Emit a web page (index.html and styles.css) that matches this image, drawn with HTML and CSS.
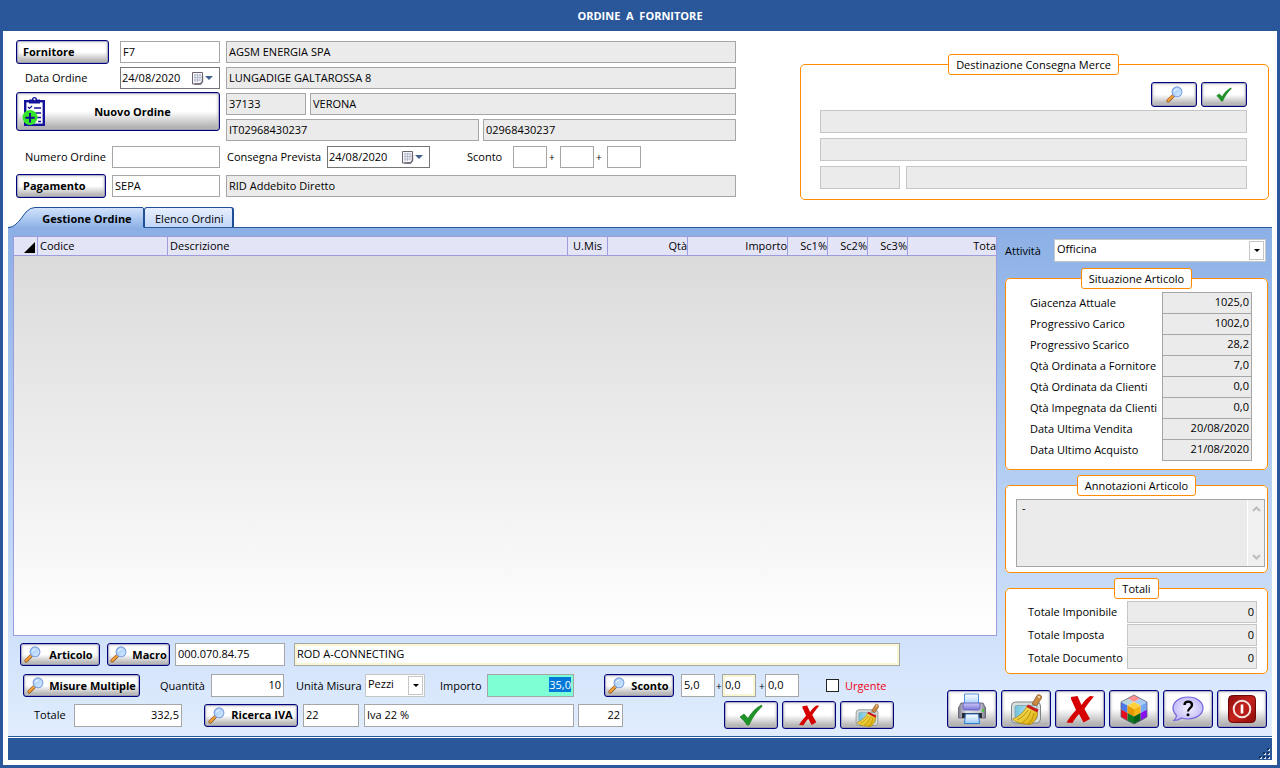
FILE: index.html
```html
<!DOCTYPE html>
<html lang="it">
<head>
<meta charset="utf-8">
<title>Ordine a Fornitore</title>
<link rel="stylesheet" href="styles.css">
</head>
<body>
<svg class="defs" aria-hidden="true">
  <defs>
    <linearGradient id="gBroom" x1="0" y1="0" x2="1" y2="1"><stop offset="0" stop-color="#fff27a"/><stop offset="1" stop-color="#d9a800"/></linearGradient>
    <linearGradient id="gGlass" x1="0" y1="0" x2="1" y2="1"><stop offset="0" stop-color="#9cc6f8"/><stop offset="1" stop-color="#d8ecff"/></linearGradient>
    <linearGradient id="gPaper" x1="0" y1="0" x2="0" y2="1"><stop offset="0" stop-color="#ffffff"/><stop offset="1" stop-color="#9ccaf8"/></linearGradient>
    <linearGradient id="gScreen" x1="0" y1="0" x2="1" y2="0"><stop offset="0" stop-color="#6fc3dc"/><stop offset="1" stop-color="#d5f0f6"/></linearGradient>
    <linearGradient id="gPrinter" x1="0" y1="0" x2="1" y2="0"><stop offset="0" stop-color="#7b7b8c"/><stop offset=".3" stop-color="#e4e4ee"/><stop offset=".8" stop-color="#c9c9d6"/><stop offset="1" stop-color="#777788"/></linearGradient>
    <linearGradient id="gViolet" x1="0" y1="0" x2="0" y2="1"><stop offset="0" stop-color="#c9c7f8"/><stop offset="1" stop-color="#7d77d8"/></linearGradient>
    <radialGradient id="gBubble"><stop offset="0" stop-color="#f3f1ff"/><stop offset="1" stop-color="#c3bdfa"/></radialGradient>
    <linearGradient id="gPower" x1="0" y1="0" x2="1" y2="1"><stop offset="0" stop-color="#8e0d0d"/><stop offset=".5" stop-color="#c4221c"/><stop offset="1" stop-color="#8c0a0a"/></linearGradient>
    <linearGradient id="gTab" x1="0" y1="0" x2="0" y2="1"><stop offset="0" stop-color="#d3e3fb"/><stop offset="1" stop-color="#8cb1e6"/></linearGradient>
  </defs>
  <symbol id="lens" viewBox="0 0 17 17">
    <path d="M2.200 14.800 7.500 9.500" stroke="#8a4a10" stroke-width="3.400" stroke-linecap="round"/>
    <path d="M2.200 14.600 7.300 9.500" stroke="#f2a33c" stroke-width="2.200" stroke-linecap="round"/>
    <circle cx="11" cy="5.800" r="4.900" fill="url(#gGlass)" stroke="#7d9fe0" stroke-width="1.100"/>
    <path d="M8.500 5.500a2.600 2.600 0 0 1 3-2.300" stroke="#eef6ff" stroke-width="1.200" fill="none"/>
  </symbol>
  <symbol id="check" viewBox="0 0 24 22">
    <path d="M1 13 5 10l4 4.500C12 9 16.500 4 22.500 1l.5 1.500C17.500 7.500 13 14 10 21H8C6 18 4 15.500 1 13z" fill="#1d9427" stroke="#117018" stroke-width=".6"/>
  </symbol>
  <symbol id="cross" viewBox="0 0 30 30">
    <path d="M6 3 12.500 2l4 9C19 7 22 4 25 2l4 .500C26 6 22 11 19.500 15L25 25l-6.500 3.500-4.500-8.500C11 23.500 9 26 7.500 29L1.500 28.500C4 24 7.500 20 11 16L6 5z" fill="#d60000"/>
  </symbol>
  <symbol id="broom" viewBox="0 0 32 32">
    <rect x="1.500" y="9" width="29" height="21" rx="4" fill="#d9dedf" stroke="#7d8586"/>
    <rect x="5" y="12.500" width="22" height="14" rx="1.500" fill="url(#gScreen)" stroke="#7fa0a8" stroke-width=".8"/>
    <path d="m22 11 5-8.500c1.500-2 5.500 0 4.500 2.500L26.500 13z" fill="#c98a45" stroke="#7c4b18" stroke-width=".7"/>
    <circle cx="29" cy="4" r=".9" fill="#fff2d8"/>
    <path d="m17 13 10 5c1.500 5-2 11-7 13.500-6-.5-13-1-17.500-5.500C9 24 14 19 17 13z" fill="url(#gBroom)" stroke="#a77b00" stroke-width=".7"/>
    <path d="M18 17c-3 5-7 8-11 10M21 18c-2 6-5 9-9 12M24 20c-1 5-3 9-6 11" fill="none" stroke="#b58900" stroke-width=".9"/>
    <path d="m18 11.500 10.500 5-1.200 3L16.500 14z" fill="#c81e1e"/>
  </symbol>
  <symbol id="calendar" viewBox="0 0 12 13">
    <path d="M.500.500h10v9l-2 2.500h-8z" fill="#f6f6fa" stroke="#6d6470"/>
    <path d="M10.500 3.500v6l-2 2.500h-6" fill="none" stroke="#6d6470" stroke-width="1.400"/>
    <path d="M2 3h7M2 5.500h7M2 8h6M3 2v8M5.500 2v8M8 2v7" stroke="#a9b0c4" stroke-width=".8"/>
  </symbol>
</svg>

<div class="window">
  <header class="titlebar"><h1>ORDINE&nbsp; A&nbsp; FORNITORE</h1></header>

  <main class="client">
    <section class="head">
      <form class="order">
        <div class="order-top">
          <div class="order-left">
            <div class="pair">
              <button type="button" class="btn left w93">Fornitore</button>
              <input class="field" value="F7" aria-label="Codice fornitore">
            </div>
            <div class="pair">
              <label class="indent" for="dataOrdine">Data Ordine</label>
              <span class="date"><input id="dataOrdine" value="24/08/2020"><button type="button" aria-label="Apri calendario"><svg width="12" height="13"><use href="#calendar"/></svg><i class="drop"></i></button></span>
            </div>
            <button type="button" class="btn new">
              <svg width="24" height="30" viewBox="0 0 24 30" aria-hidden="true">
                <rect x="3.200" y="4.200" width="18.600" height="23.600" fill="#fff" stroke="#14149a" stroke-width="2.400"/>
                <path d="M7 2.500h3a2.500 2.500 0 0 1 5 0h3v4H7z" fill="#14149a"/><circle cx="12.500" cy="2.300" r="1" fill="#fff"/>
                <path d="m6 10 1.500 1.500L10 9M6 15l1.500 1.500L10 14" fill="none" stroke="#14149a" stroke-width="1.200"/>
                <path d="M12 11h7M12 16h7M15 20.500h4M16 24.500h3" stroke="#14149a" stroke-width="1.600"/>
                <circle cx="8" cy="20.500" r="7.500" fill="#35e528"/>
                <path d="M8 16v9.500M3.300 20.700h9.500" stroke="#10108a" stroke-width="2"/>
              </svg>
              <span>Nuovo Ordine</span>
            </button>
          </div>
          <div class="order-right">
            <input class="field ro" readonly value="AGSM ENERGIA SPA" aria-label="Ragione sociale">
            <input class="field ro" readonly value="LUNGADIGE GALTAROSSA 8" aria-label="Indirizzo">
            <div class="split cap">
              <input class="field ro" readonly value="37133" aria-label="CAP">
              <input class="field ro" readonly value="VERONA" aria-label="Città">
            </div>
            <div class="split vat">
              <input class="field ro" readonly value="IT02968430237" aria-label="Partita IVA">
              <input class="field ro" readonly value="02968430237" aria-label="Codice fiscale">
            </div>
          </div>
        </div>
        <div class="order-number">
          <label class="indent" for="numero">Numero Ordine</label>
          <input id="numero" class="field w108">
          <label for="consegna">Consegna Prevista</label>
          <span class="date w103"><input id="consegna" value="24/08/2020"><button type="button" aria-label="Apri calendario"><svg width="12" height="13"><use href="#calendar"/></svg><i class="drop"></i></button></span>
          <label for="sc1">Sconto</label>
          <input id="sc1" class="field">
          <span class="plus">+</span>
          <input class="field" aria-label="Sconto 2">
          <span class="plus">+</span>
          <input class="field" aria-label="Sconto 3">
        </div>
        <div class="payment">
          <button type="button" class="btn left">Pagamento</button>
          <input class="field" value="SEPA" aria-label="Codice pagamento">
          <input class="field ro" readonly value="RID Addebito Diretto" aria-label="Descrizione pagamento">
        </div>
      </form>

      <fieldset class="box delivery">
        <legend>Destinazione Consegna Merce</legend>
        <div class="delivery-tools">
          <button type="button" class="btn" aria-label="Cerca destinazione"><svg width="17" height="17"><use href="#lens"/></svg></button>
          <button type="button" class="btn" aria-label="Conferma destinazione"><svg width="16" height="15"><use href="#check"/></svg></button>
        </div>
        <input class="field ro pale" readonly aria-label="Nome destinazione">
        <input class="field ro pale" readonly aria-label="Indirizzo destinazione">
        <div class="delivery-city">
          <input class="field ro pale" readonly aria-label="CAP destinazione">
          <input class="field ro pale" readonly aria-label="Città destinazione">
        </div>
      </fieldset>
    </section>

    <nav class="tabs">
      <button type="button" class="tab active"><svg class="tab-shape" width="136" height="21" viewBox="0 0 136 21" aria-hidden="true"><path d="M0 21 C6 20 8 17 12 13 L18 5 Q22 .5 27 .5 H134 Q135.500 .5 135.500 2 V21z" fill="url(#gTab)"/><path d="M0 20.500 C6 20 8 17 12 13 L18 5 Q22 .5 27 .5 H134 Q135.500 .5 135.500 2 V20" fill="none" stroke="#1f5096"/></svg><span>Gestione Ordine</span></button>
      <button type="button" class="tab">Elenco Ordini</button>
    </nav>

    <section class="panel">
      <div class="grid-area">
        <table class="items">
          <colgroup><col class="c24"><col class="c130"><col><col class="c40"><col class="c80"><col class="c100"><col class="c40"><col class="c40"><col class="c40"><col class="c88"></colgroup>
          <thead><tr>
            <th><svg width="11" height="11" viewBox="0 0 11 11" aria-hidden="true"><path d="M11 0v11H0z"/></svg></th>
            <th>Codice</th><th>Descrizione</th><th class="mid">U.Mis</th><th class="num">Qtà</th><th class="num">Importo</th><th class="num">Sc1%</th><th class="num">Sc2%</th><th class="num">Sc3%</th><th class="num">Tota</th>
          </tr></thead>
        </table>
      </div>

      <aside class="side">
        <div class="activity">
          <label for="attivita">Attività</label>
          <span class="combo"><select id="attivita"><option>Officina</option></select><i class="arrow"></i></span>
        </div>
        <fieldset class="box">
          <legend>Situazione Articolo</legend>
          <div class="stock">
            <label for="s1">Giacenza Attuale</label><input id="s1" class="field ro num" readonly value="1025,0">
            <label for="s2">Progressivo Carico</label><input id="s2" class="field ro num" readonly value="1002,0">
            <label for="s3">Progressivo Scarico</label><input id="s3" class="field ro num" readonly value="28,2">
            <label for="s4">Qtà Ordinata a Fornitore</label><input id="s4" class="field ro num" readonly value="7,0">
            <label for="s5">Qtà Ordinata da Clienti</label><input id="s5" class="field ro num" readonly value="0,0">
            <label for="s6">Qtà Impegnata da Clienti</label><input id="s6" class="field ro num" readonly value="0,0">
            <label for="s7">Data Ultima Vendita</label><input id="s7" class="field ro num" readonly value="20/08/2020">
            <label for="s8">Data Ultimo Acquisto</label><input id="s8" class="field ro num" readonly value="21/08/2020">
          </div>
        </fieldset>
        <fieldset class="box">
          <legend>Annotazioni Articolo</legend>
          <div class="notes">
            <textarea readonly aria-label="Annotazioni Articolo">-</textarea>
            <div class="scroll">
              <svg width="9" height="6" viewBox="0 0 9 6"><path d="m1 5 3.500-3.500L8 5" fill="none" stroke="#bdbdbd" stroke-width="2"/></svg>
              <svg width="9" height="6" viewBox="0 0 9 6"><path d="m1 1 3.500 3.500L8 1" fill="none" stroke="#bdbdbd" stroke-width="2"/></svg>
            </div>
          </div>
        </fieldset>
        <fieldset class="box">
          <legend>Totali</legend>
          <div class="totals">
            <label for="t1">Totale Imponibile</label><input id="t1" class="field ro pale num" readonly value="0">
            <label for="t2">Totale Imposta</label><input id="t2" class="field ro pale num" readonly value="0">
            <label for="t3">Totale Documento</label><input id="t3" class="field ro pale num" readonly value="0">
          </div>
        </fieldset>
      </aside>

      <form class="entry">
        <div class="row row-article">
          <button type="button" class="btn icon w80"><svg width="17" height="17"><use href="#lens"/></svg><span>Articolo</span></button>
          <button type="button" class="btn icon w63"><svg width="17" height="17"><use href="#lens"/></svg><span>Macro</span></button>
          <input class="field w110" value="000.070.84.75" aria-label="Codice articolo">
          <input class="field cream" value="ROD A-CONNECTING" aria-label="Descrizione articolo">
        </div>
        <div class="row row-quantity">
          <button type="button" class="btn icon w117"><svg width="17" height="17"><use href="#lens"/></svg><span>Misure Multiple</span></button>
          <label for="qta">Quantità</label><input id="qta" class="field num w73" value="10">
          <label for="um">Unità Misura</label>
          <span class="combo w60"><select id="um"><option>Pezzi</option></select><i class="arrow"></i></span>
          <label for="importo">Importo</label><input id="importo" class="field num w87 focus" value="35,0">
          <button type="button" class="btn icon w70"><svg width="17" height="17"><use href="#lens"/></svg><span>Sconto</span></button>
          <input class="field w34" value="5,0" aria-label="Sconto riga 1">
          <span class="plus">+</span>
          <input class="field w34 cream" value="0,0" aria-label="Sconto riga 2">
          <span class="plus">+</span>
          <input class="field w34" value="0,0" aria-label="Sconto riga 3">
          <label class="urgent"><input type="checkbox">Urgente</label>
        </div>
        <div class="row row-total">
          <label for="tot">Totale</label><input id="tot" class="field num w108" value="332,5">
          <button type="button" class="btn icon w94"><svg width="17" height="17"><use href="#lens"/></svg><span>Ricerca IVA</span></button>
          <input class="field w56" value="22" aria-label="Codice IVA">
          <input class="field w210" value="Iva 22 %" aria-label="Descrizione IVA">
          <input class="field num w45" value="22" aria-label="Aliquota IVA">
          <button type="button" class="btn act" aria-label="Conferma riga"><svg width="24" height="22"><use href="#check"/></svg></button>
          <button type="button" class="btn act" aria-label="Annulla riga"><svg width="22" height="22"><use href="#cross"/></svg></button>
          <button type="button" class="btn act" aria-label="Pulisci riga"><svg width="24" height="24"><use href="#broom"/></svg></button>
        </div>
      </form>

      <div class="toolbar">
        <button type="button" class="btn" aria-label="Stampa"><svg width="28" height="32" viewBox="0 0 28 32">
          <path d="M3 10h22l2.500 5v10H.5V15z" fill="url(#gPrinter)" stroke="#555566" stroke-width=".8"/>
          <path d="M6.500 1h14v11h-14z" fill="url(#gPaper)" stroke="#4f92dc"/>
          <path d="M5 10h17v5q0 2-2 2H7q-2 0-2-2z" fill="url(#gViolet)" stroke="#5a54b4" stroke-width=".8"/>
          <path d="M4 20h20v5H4z" fill="#2b2b33"/><path d="M7.500 21h13l1 9.500h-15z" fill="url(#gPaper)" stroke="#2f7ad0"/>
          <circle cx="25" cy="17.500" r="1.300" fill="#3ecf24"/></svg></button>
        <button type="button" class="btn" aria-label="Pulisci"><svg width="32" height="32"><use href="#broom"/></svg></button>
        <button type="button" class="btn" aria-label="Elimina"><svg width="30" height="30"><use href="#cross"/></svg></button>
        <button type="button" class="btn" aria-label="Articoli"><svg width="28" height="31" viewBox="0 0 28 31">
          <path d="M14 1 20.500 4.500 14 8 7.500 4.500z" fill="#ff9090"/><path d="m7.500 4.500 6.500 3.500-6.500 3.500L1 8z" fill="#b8d4dc"/><path d="M20.500 4.500 27 8l-6.500 3.500L14 8z" fill="#a9ccf4"/><path d="m14 8 6.500 3.500L14 15l-6.500-3.500z" fill="#ffd23c"/>
          <path d="m1 8 6.500 3.500v7.500L1 15.500z" fill="#4a78e8"/><path d="M7.500 11.500 14 15v7.500L7.500 19z" fill="#e89a00"/><path d="M1 15.500 7.500 19v8L1 23z" fill="#e80a1e"/><path d="m7.500 19 6.500 3.500V30l-6.500-3z" fill="#0d7a22"/>
          <path d="m27 8-6.500 3.500v7.500l6.500-3.500z" fill="#76a8f8"/><path d="M20.500 11.500 14 15v7.500l6.500-3.500z" fill="#f8b414"/><path d="M27 15.500 20.500 19v8l6.500-4z" fill="#8a10f0"/><path d="M20.500 19 14 22.500V30l6.500-3z" fill="#076018"/>
          <path d="M14 1 27 8v15l-13 7L1 23V8z" fill="none" stroke="#60607a" stroke-width=".8"/></svg></button>
        <button type="button" class="btn" aria-label="Aiuto"><svg width="32" height="26" viewBox="0 0 32 26">
          <path d="M16 1c8.500 0 15 4.800 15 11s-6.500 11-15 11c-2.500 0-4.500-.4-6.500-1-2 1.500-4.500 2.500-7.500 2.500 1.500-1.500 2.500-3 2.500-5C2.500 17.500 1 15 1 12 1 5.800 7.500 1 16 1z" fill="url(#gBubble)" stroke="#7464d8" stroke-width="1.200"/>
          <path d="M12.500 9c0-4.500 7.500-4.500 7.500 0 0 3-4 3.300-4 6.500" fill="none" stroke="#000" stroke-width="2.300"/><circle cx="16" cy="18.800" r="1.500"/></svg></button>
        <button type="button" class="btn" aria-label="Esci"><svg width="28" height="28" viewBox="0 0 28 28">
          <rect x=".5" y=".5" width="27" height="27" rx="4" fill="url(#gPower)" stroke="#6f0707"/><circle cx="14" cy="14" r="8.300" fill="none" stroke="#f7e4e2" stroke-width="2"/><path d="M14 9.500v9" stroke="#fff" stroke-width="2.600"/></svg></button>
      </div>
    </section>
    <footer class="status">
      <svg width="13" height="12" viewBox="0 0 13 12" aria-hidden="true"><path d="M9 1h2v2H9zM5 5h2v2H5zM9 5h2v2H9zM1 9h2v2H1zM5 9h2v2H5zM9 9h2v2H9z" fill="#d5dff0"/><path d="M8 0h2v2H8zM4 4h2v2H4zM8 4h2v2H8zM0 8h2v2H0zM4 8h2v2H4zM8 8h2v2H8z" fill="#16305c"/></svg>
    </footer>
  </main>
</div>
<script src="app.js"></script>
</body>
</html>
```

FILE: styles.css
```css
* { box-sizing: border-box; }

body {
  margin: 0;
  font: 11px/14px "Open Sans", "Noto Sans", sans-serif;
  color: #000;
}

button, input, select, textarea {
  font: inherit;
  color: inherit;
  margin: 0;
}

.defs { position: absolute; width: 0; height: 0; }

.window {
  display: flex;
  flex-direction: column;
  min-height: 100vh;
  padding: 0 3px 3px;
  background: #2a579a;
}

.titlebar {
  display: flex;
  align-items: center;
  justify-content: center;
  height: 31px;
  color: #fff;
}
.titlebar h1 { margin: 0; font-size: 11px; font-weight: 700; }

.client {
  flex: 1;
  display: flex;
  flex-direction: column;
  padding: 9px 5px 5px;
  background: #fff;
}

label { white-space: nowrap; }

/* Fields */
.field {
  width: 100%;
  min-width: 0;
  height: 22px;
  padding: 0 2px 2px;
  border: 1px solid #a6a6a6;
  border-radius: 0;
  background: #fff;
}
.ro { background: #ebebeb; }
.pale { border-color: #c6c6c6; }
.num { text-align: right; }
.cream { box-shadow: inset 0 0 0 2px #f9f6d4; }
.focus { background: #7fffd4; outline: none; }
.focus::selection { background: #0078d7; color: #fff; }

.date {
  display: flex;
  align-items: center;
  height: 22px;
  width: 100%;
  padding-right: 6px;
  border: 1px solid #767676;
  background: #fff;
}
.date input {
  flex: 1;
  min-width: 0;
  padding: 0 1px;
  border: 0;
  background: none;
}
.date button {
  display: flex;
  align-items: center;
  gap: 1px;
  padding: 0;
  border: 0;
  background: none;
}
.drop {
  border: 4px solid transparent;
  border-top-color: #44608f;
  border-bottom: 0;
}

.combo { position: relative; display: block; height: 23px; }
.combo select {
  width: 100%;
  height: 100%;
  padding: 0 2px 3px;
  border: 1px solid #c6c6c6;
  border-radius: 0;
  background: #fff;
  appearance: none;
}
.arrow {
  position: absolute;
  top: 2px;
  right: 2px;
  bottom: 2px;
  display: flex;
  align-items: center;
  justify-content: center;
  width: 15px;
  border: 1px solid #c6c6c6;
  background: #fff;
  pointer-events: none;
}
.arrow::before {
  content: "";
  border: 3px solid transparent;
  border-top-color: #000;
  border-bottom: 0;
}

/* Buttons */
.btn {
  display: flex;
  align-items: center;
  justify-content: center;
  width: 100%;
  height: 24px;
  padding: 0;
  border: 1px solid #000080;
  border-radius: 3px;
  background: linear-gradient(#fff 0%, #fff 50%, #e4e4e4 65%, #a4a4a4 100%);
  box-shadow: inset 0 0 0 1px rgba(120, 120, 160, .45), inset 0 0 2px 2px rgba(200, 200, 200, .5);
  font-weight: 700;
  white-space: nowrap;
}
.left { justify-content: flex-start; padding-left: 6px; }
.icon { height: 23px; gap: 5px; padding: 0 3px; }
.icon svg { flex: none; }
.icon span { flex: 1; text-align: center; }

.w34 { width: 34px; }
.w45 { width: 45px; }
.w56 { width: 56px; }
.w60 { width: 60px; }
.w63 { width: 63px; }
.w70 { width: 70px; }
.w73 { width: 73px; }
.w80 { width: 80px; }
.w87 { width: 87px; }
.w93 { width: 93px; }
.w94 { width: 94px; }
.w103 { width: 103px; }
.w108 { width: 108px; }
.w110 { width: 110px; }
.w117 { width: 117px; }
.w210 { width: 210px; }

/* Order header */
.head {
  display: grid;
  grid-template-columns: 720fr 469fr;
  column-gap: 64px;
  padding: 0 3px 0 8px;
}
.order { min-width: 0; }
.order-top { display: grid; grid-template-columns: 204px 1fr; column-gap: 6px; }
.order-left { display: grid; row-gap: 3px; align-content: start; }
.pair { display: grid; grid-template-columns: 104px 100px; align-items: center; }
.indent { padding-left: 9px; }
.new { height: 39px; justify-content: flex-start; padding-left: 5px; }
.new span { flex: 1; text-align: center; }
.order-right { display: grid; row-gap: 4px; padding-top: 1px; }
.split { display: grid; }
.cap { grid-template-columns: 80px 1fr; column-gap: 4px; }
.vat { grid-template-columns: 253px 1fr; column-gap: 4px; }
.order-number {
  display: grid;
  grid-template-columns: 96px 115px 100px 140px 46px 34px 13px 34px 13px 34px;
  align-items: center;
  margin-top: 5px;
}
.plus { font-size: 10px; }
.order-number .plus { padding-left: 2px; }
.payment {
  display: grid;
  grid-template-columns: 90px 108px 1fr;
  column-gap: 6px;
  align-items: center;
  margin-top: 6px;
}

/* Orange group boxes */
.box {
  min-width: 0;
  margin: 0;
  padding: 0;
  border: 1px solid #ff8c00;
  border-radius: 5px;
  background: #fff;
}
.box legend {
  height: 21px;
  margin: 0 auto;
  padding: 2px 7px;
  border: 1px solid #ff8c00;
  border-radius: 3px;
  background: #fff;
  line-height: 15px;
}
.delivery {
  align-self: start;
  margin-top: 14px;
  padding: 7px 21px 10px 19px;
}
.delivery .field { display: block; height: 23px; margin-bottom: 5px; }
.delivery-tools { display: flex; justify-content: flex-end; gap: 4px; margin-bottom: 3px; }
.delivery-tools .btn { width: 46px; height: 25px; }
.delivery-city { display: grid; grid-template-columns: 80px 1fr; column-gap: 6px; }
.delivery-city .field { margin-bottom: 0; }

/* Tabs */
.tabs { display: flex; margin-top: 7px; height: 20px; }
.tab {
  position: relative;
  height: 20px;
  padding: 2px 8px 0 10px;
  border: 1px solid #1f5096;
  border-bottom: 0;
  border-right-width: 2px;
  border-radius: 3px 3px 0 0;
  background: linear-gradient(#e6effd, #c2d6f8);
}
.active {
  width: 136px;
  height: 21px;
  padding: 2px 0 0 22px;
  border: 0;
  background: none;
  font-weight: 700;
  z-index: 1;
}
.tab-shape { position: absolute; left: 0; top: 0; }
.active span { position: relative; }

/* Order lines panel */
.panel {
  flex: 1;
  display: grid;
  grid-template-columns: 1fr 58px 263px;
  grid-template-rows: 1fr 40px auto;
  padding: 8px 4px 0 5px;
  border-top: 1px solid #2a5a9c;
  border-bottom: 1px solid #2a579a;
  background: linear-gradient(#8cb0e6, #b5cff4 50%, #e1edfe);
}
.grid-area {
  grid-column: 1 / 3;
  grid-row: 1;
  margin-right: 8px;
  border: 1px solid #9c9cde;
  background: linear-gradient(#d9d9d9, #fff);
  overflow: hidden;
}
.items {
  width: 100%;
  table-layout: fixed;
  border-collapse: separate;
  border-spacing: 0;
}
.items th {
  height: 19px;
  padding: 0 0 0 2px;
  border-right: 1px solid #9c9cde;
  border-bottom: 1px solid #9c9cde;
  background: #e4e4f7;
  font-weight: 400;
  text-align: left;
  white-space: nowrap;
}
.items th:first-child { text-align: right; }
.items th:last-child { border-right: 0; }
.items th.num { text-align: right; padding: 0; }
.items th.mid { text-align: center; padding: 0; }
.items svg { display: block; margin: 2px 2px 0 auto; }
.c24 { width: 24px; }
.c40 { width: 40px; }
.c80 { width: 80px; }
.c88 { width: 88px; }
.c100 { width: 100px; }
.c130 { width: 130px; }

.side { grid-column: 3; grid-row: 1 / 3; padding-top: 3px; }
.side .box { margin-top: 5px; }
.activity {
  display: grid;
  grid-template-columns: 49px 1fr;
  align-items: center;
  padding: 0 2px 1px 0;
}
.stock {
  display: grid;
  grid-template-columns: 132px 90px;
  grid-auto-rows: 21px;
  align-items: center;
  padding: 3px 0 9px 24px;
}
.notes {
  display: flex;
  height: 68px;
  margin: 3px 2px 5px 10px;
  border: 1px solid #a6a6a6;
}
.notes textarea {
  flex: 1;
  min-width: 0;
  padding: 1px 5px;
  border: 0;
  background: #ebebeb;
  resize: none;
}
.scroll {
  display: flex;
  flex-direction: column;
  align-items: center;
  justify-content: space-between;
  width: 17px;
  padding: 6px 0;
  border-left: 1px solid #fff;
  background: #f0f0f0;
}
.totals {
  display: grid;
  grid-template-columns: 99px 130px;
  row-gap: 1px;
  align-items: center;
  padding: 2px 0 4px 22px;
}

/* Line entry */
.entry { grid-column: 1; grid-row: 2 / 4; padding-top: 7px; }
.row { display: grid; align-items: center; }
.row .field { height: 23px; }
.row-article { grid-template-columns: 87px 68px 119px 606px; padding-left: 7px; }
.row-quantity {
  grid-template-columns: 137px 51px 85px 69px 75px 47px 117px 77px 35px 6px 37px 6px 61px auto;
  margin-top: 8px;
  padding-left: 10px;
}
.row-total {
  grid-template-columns: 40px 130px 99px 61px 214px 146px 58px 58px 54px;
  margin: 4px 0 7px;
  padding-left: 21px;
}
.urgent { display: flex; align-items: center; gap: 6px; color: #f00014; }
.urgent input {
  width: 13px;
  height: 13px;
  border: 1px solid #222;
  background: #fff;
  appearance: none;
}
.act { width: 54px; height: 28px; }

.toolbar {
  grid-column: 2 / 4;
  grid-row: 3;
  display: flex;
  align-items: flex-end;
  gap: 4px;
  padding-bottom: 8px;
}
.toolbar .btn { width: 50px; height: 38px; }

.status {
  display: flex;
  align-items: flex-end;
  justify-content: flex-end;
  height: 23px;
  border-top: 1px solid #fff;
  background: #2a579a;
}
```

FILE: app.js
```js
const amount = document.getElementById("importo");
amount.focus();
amount.select();
```
